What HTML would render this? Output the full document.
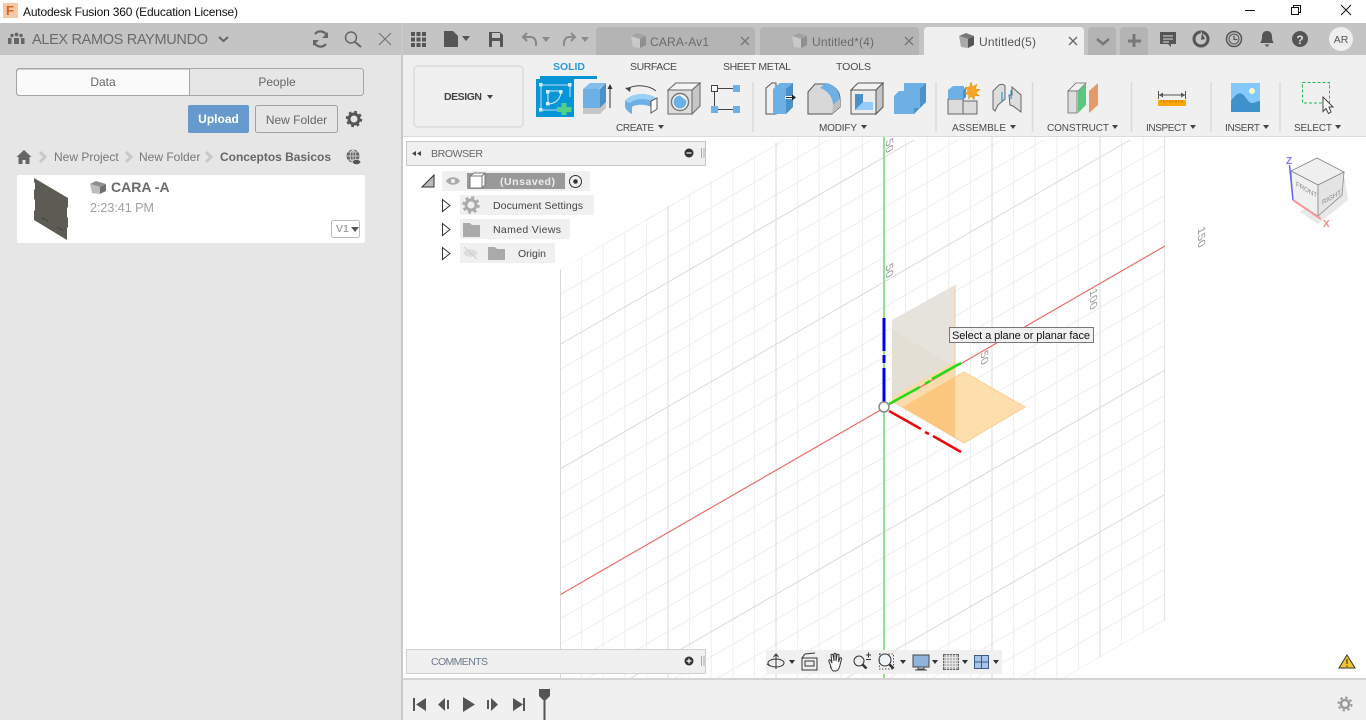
<!DOCTYPE html>
<html><head><meta charset="utf-8"><title>Autodesk Fusion 360</title>
<style>
html,body{margin:0;padding:0;background:#fff;width:1366px;height:720px;overflow:hidden}
svg{display:block;position:absolute;left:0;top:0}
text{font-family:"Liberation Sans",Arial,sans-serif;fill:#555}
.l{font-size:10px;fill:#4a4a4a}
</style></head><body>
<svg width="1366" height="720" viewBox="0 0 1366 720" xmlns="http://www.w3.org/2000/svg">
<defs>
<clipPath id="g"><polygon points="560,270 785,137 1164.800,137 1164.800,620 1064,678 560,678"/></clipPath>
<clipPath id="vp"><rect x="403" y="137" width="963" height="541"/></clipPath>
</defs>
<rect width="1366" height="720" fill="#fff"/>
<!-- title bar -->
<rect x="3" y="3" width="15" height="15" fill="#f3c9a8"/>
<text x="6" y="15" style="font-size:13px;font-weight:bold;fill:#d9661f">F</text>
<text x="23" y="16" style="font-size:12px;fill:#111" textLength="215">Autodesk Fusion 360 (Education License)</text>
<path d="M1245 10.500h10" stroke="#111" fill="none"/>
<path d="M1291.500 7.500h7v7h-7zM1293.500 7.500v-2h7v7h-2" stroke="#111" fill="none"/>
<path d="M1341 5l10 10M1351 5l-10 10" stroke="#111" fill="none"/>

<!-- viewport -->
<g clip-path="url(#vp)">
<g clip-path="url(#g)">
<path fill="none" stroke="#eeeeee" d="M581.600 137V678M603.200 137V678M624.800 137V678M646.400 137V678M689.600 137V678M711.200 137V678M732.800 137V678M754.400 137V678M797.600 137V678M819.200 137V678M840.800 137V678M862.400 137V678M905.600 137V678M927.200 137V678M948.800 137V678M970.400 137V678M1013.600 137V678M1035.200 137V678M1056.800 137V678M1078.400 137V678M1121.600 137V678M1143.200 137V678"/>
<path fill="none" stroke="#eeeeee" d="M560 269.700L785 139.900M560 294.600L828 140M560 319.600L871 140M560 369.500L958 140M560 394.400L1001 140M560 419.400L1044 140M560 444.300L1087 140M560 494.200L1165 145.200M560 519.200L1165 170.200M560 544.100L1165 195.100M560 569L1165 220M560 619L1165 270M560 644L1165 295M560 669L1165 320M587.700 678L1165 345M674.400 678L1165 395M717.700 678L1165 420M761 678L1165 445M804.400 678L1165 470M889.400 678L1165 519M932.700 678L1165 544M976 678L1165 569M1019.400 678L1165 594M1063.600 678L1165 619.500"/>
<path fill="none" stroke="#dbdbdb" d="M560.500 137V678M668 137V678M776 137V678M992 137V678M1100 137V678M1164.500 137V678"/>
<path fill="none" stroke="#dbdbdb" d="M560 344.500L914 140M560 469L1130 140M631 678L1165 370M846.900 678L1165 494.500"/>
</g>
<!-- planes -->
<polygon points="892,320 955,285 955,362 892,398" fill="#e6e2dc"/>
<polygon points="892,330 955,367 955,438 892,402" fill="#e3ddd2" opacity=".75"/>
<polygon points="892,397 955,361 955,438 892,402" fill="#fbd9a4" opacity=".85"/>
<polygon points="903,407 964,372 1025,407 964,443" fill="#fddca6" stroke="#fcc983" stroke-width="1" opacity=".9"/>
<polygon points="903,407 955,377 955,438" fill="#fcc77f"/>
<path d="M955 285V438" stroke="#f4cc94" stroke-width="1"/>
<!-- axes -->
<path d="M560.500 594.500L1165 246" stroke="#ec6b6b" stroke-width="1.200" fill="none"/>
<path d="M884 137V678" stroke="#94e08c" stroke-width="2" fill="none"/>
<path d="M884 318V351M884 355V363M884 368V402" stroke="#0000ee" stroke-width="3" fill="none"/>
<path d="M889 404L920 387M925 384L930 381M932 379L961 363" stroke="#22dd11" stroke-width="2.500" fill="none"/>
<path d="M889 411L921 429M925 432L929 434M933 436L961 452" stroke="#ee0808" stroke-width="2.500" fill="none"/>
<circle cx="884" cy="407" r="5" fill="#fff" stroke="#8a8a8a" stroke-width="1.500"/>
<!-- labels -->
<text transform="matrix(0 1 -.866 .5 886 141)" style="fill:#999;font-size:12px">50</text>
<text transform="matrix(0 1 -.866 .5 886 266)" style="fill:#999;font-size:12px">50</text>
<text transform="matrix(0 1 -.866 .5 981 353)" style="fill:#999;font-size:12px">50</text>
<text transform="matrix(0 1 -.866 .5 1090 291)" style="fill:#999;font-size:12px">100</text>
<text transform="matrix(0 1 -.866 .5 1198 229)" style="fill:#999;font-size:12px">150</text>
<!-- view cube -->
<polygon points="1300,212 1318,224 1348,200 1345,178" fill="#e0e0e0" opacity=".7"/>
<polygon points="1317,158 1344,172 1318,185 1291,171" fill="#efefef" stroke="#888" stroke-width=".8"/>
<polygon points="1291,171 1318,185 1318,216 1293,200" fill="#f0f0f0" stroke="#888" stroke-width=".8"/>
<polygon points="1318,185 1344,172 1342,195 1318,216" fill="#e4e4e4" stroke="#888" stroke-width=".8"/>
<text transform="matrix(.87 .5 0 1 1296 186)" style="font-size:7px;fill:#888">FRONT</text>
<text transform="matrix(.87 -.5 0 1 1322 205)" style="font-size:7px;fill:#888">RIGHT</text>
<path d="M1289.500 165L1293 200" stroke="#6666ee" stroke-width="1.500"/>
<path d="M1293 200L1321 219" stroke="#f49a9a" stroke-width="2"/>
<text x="1286" y="164" style="font-size:10px;fill:#7a7aee;font-weight:bold">Z</text>
<text x="1323" y="227" style="font-size:10px;fill:#f08a8a;font-weight:bold">X</text>
<!-- tooltip -->
<rect x="949.500" y="327.500" width="144" height="15" fill="#f0f0f0" stroke="#777"/>
<text x="952" y="339" style="font-size:11px;fill:#111" textLength="138">Select a plane or planar face</text>
<!-- warning -->
<path d="M1347 655l8 13h-16z" fill="#f4c430" stroke="#333" stroke-width="1"/>
<path d="M1347 659v5M1347 665.500v1.500" stroke="#222"/>
</g>

<!-- top gray bars -->
<rect x="0" y="23" width="1366" height="32" fill="#c4c4c4"/>
<rect x="0" y="55" width="402" height="665" fill="#e6e6e6"/>
<rect x="401" y="23" width="2" height="697" fill="#c9c9c9"/>
<!-- left header -->
<g fill="#666">
<circle cx="12" cy="35.500" r="1.700"/><circle cx="16.500" cy="34.500" r="1.900"/><circle cx="21" cy="35.500" r="1.700"/>
<rect x="8" y="38" width="3.500" height="6"/><rect x="14" y="38" width="5" height="6"/><rect x="21" y="38" width="3.500" height="6"/>
</g>
<text x="32" y="44" style="font-size:14.500px;fill:#6a6a6a" textLength="176">ALEX RAMOS RAYMUNDO</text>
<path d="M219 37l4.500 4 4.500-4" stroke="#666" stroke-width="2" fill="none"/>
<path d="M327 36a7 7 0 0 0-12-2M314 42a7 7 0 0 0 12 2" stroke="#666" stroke-width="2.200" fill="none"/>
<path d="M328 32v6h-6zM313 46v-6h6z" fill="#666"/>
<circle cx="351" cy="37.500" r="5.500" fill="none" stroke="#666" stroke-width="1.500"/>
<path d="M355 42l6 5" stroke="#666" stroke-width="2"/>
<path d="M379 33l12 12M391 33l-12 12" stroke="#777" stroke-width="1.200"/>

<!-- data/people -->
<rect x="16.500" y="68.500" width="347" height="27" rx="3" fill="#e6e6e6" stroke="#a5a5a5"/>
<path d="M189.500 69H19.500a3 3 0 0 0-3 3v20.500a3 3 0 0 0 3 3h170z" fill="#fafafa" stroke="#a5a5a5"/>
<text x="103" y="86" text-anchor="middle" style="font-size:12px;fill:#666">Data</text>
<text x="277" y="86" text-anchor="middle" style="font-size:12px;fill:#666">People</text>
<rect x="188" y="105" width="61" height="28" rx="2" fill="#6699cc"/>
<text x="218.500" y="123" text-anchor="middle" style="font-size:12px;font-weight:bold;fill:#fff">Upload</text>
<rect x="255.500" y="105.500" width="82" height="27" rx="2" fill="#e6e6e6" stroke="#a0a0a0"/>
<text x="296.500" y="124" text-anchor="middle" style="font-size:12px;fill:#666">New Folder</text>
<circle cx="354" cy="119" r="5" fill="none" stroke="#555" stroke-width="3"/>
<circle cx="354" cy="119" r="7.200" fill="none" stroke="#555" stroke-width="2" stroke-dasharray="2.800 2.850"/>
<!-- breadcrumbs -->
<path d="M24 150l-7.500 7h2v7h4v-4h3v4h4v-7h2z" fill="#666"/>
<path d="M40 152l5 5-5 5M126 152l5 5-5 5M206 152l5 5-5 5" stroke="#c8c8c8" stroke-width="3" fill="none"/>
<text x="54" y="161" style="font-size:12px;fill:#777">New Project</text>
<text x="139" y="161" style="font-size:12px;fill:#777">New Folder</text>
<text x="220" y="161" style="font-size:12px;fill:#666;font-weight:bold" textLength="111">Conceptos Basicos</text>
<circle cx="353" cy="156" r="6.500" fill="#666"/>
<path d="M346.500 156h13M353 149.500v13M348 152h10M348 160h10M353 149.500c-4 4-4 9 0 13M353 149.500c4 4 4 9 0 13" stroke="#e6e6e6" stroke-width=".7" fill="none"/>
<path d="M352 162c2-3.500 7-3.500 9 0c-2 3.500-7 3.500-9 0z" fill="#555" stroke="#e6e6e6" stroke-width=".7"/>
<!-- card -->
<rect x="17" y="175" width="348" height="68" rx="2" fill="#fff"/>
<polygon points="34,178 68,198 68,207 67,208 67,217 68,218 68,227 67,228 67,240 34,220 34,211 35,210 35,200 34,199 34,190 35,189 35,183 34,182" fill="#5c5c54"/>
<path d="M42 218l6 3M57 227l6 3" stroke="#333" stroke-dasharray="1.500 1"/>
<polygon points="90,184 96,181 106,184 100,187" fill="#8f8f8f"/>
<polygon points="90,184 100,187 100,194 92,193" fill="#bdbdbd"/>
<polygon points="100,187 106,184 106,191 100,194" fill="#6f6f6f"/>
<text x="111" y="192" style="font-size:14px;font-weight:bold;fill:#6a6a6a">CARA -A</text>
<text x="90" y="212" style="font-size:12.500px;fill:#a0a0a0">2:23:41 PM</text>
<rect x="331.500" y="220.500" width="28" height="17" rx="2" fill="#fff" stroke="#bbb"/>
<text x="336" y="232" style="font-size:10.500px;fill:#888">V1</text>
<path d="M351 227h8l-4 5z" fill="#555"/>

<!-- toolbar -->
<g fill="#555">
<rect x="411" y="32" width="4" height="4"/><rect x="416.500" y="32" width="4" height="4"/><rect x="422" y="32" width="4" height="4"/>
<rect x="411" y="37.500" width="4" height="4"/><rect x="416.500" y="37.500" width="4" height="4"/><rect x="422" y="37.500" width="4" height="4"/>
<rect x="411" y="43" width="4" height="4"/><rect x="416.500" y="43" width="4" height="4"/><rect x="422" y="43" width="4" height="4"/>
<path d="M444 31h9l5 5v11h-14z"/><path d="M462 36h8l-4 5z"/>
<path d="M489 32h11l3 3v12h-14zM492 33v5h8v-5zM492 41v6h8v-6z" fill-rule="evenodd"/>
</g>
<g fill="none" stroke="#888" stroke-width="2"><path d="M523 37h8c3 0 5 3 5 6v3M527 33l-4 4 4 4"/><path d="M575 37h-6c-3 0-5 3-5 6v3M571 33l4 4-4 4" stroke="#8a8a8a"/></g>
<path d="M542 37h8l-4 5zM581 37h8l-4 5z" fill="#8a8a8a"/>
<!-- tabs -->
<path d="M596 55V31a4 4 0 0 1 4-4H751a4 4 0 0 1 4 4V55z" fill="#b4b4b4"/>
<path d="M760 55V31a4 4 0 0 1 4-4H915a4 4 0 0 1 4 4V55z" fill="#b4b4b4"/>
<path d="M924 55V31a4 4 0 0 1 4-4H1080a4 4 0 0 1 4 4V55z" fill="#f0f0f0"/>
<path d="M631 36l7-3 8 3-6 3z" fill="#a3a3a3"/><path d="M631 36l9 3v9l-7-1z" fill="#c9c9c9"/><path d="M640 39l6-3v9l-6 3z" fill="#8f8f8f"/>
<text x="650" y="46" style="font-size:12px;fill:#6a6a6a" textLength="59">CARA-Av1</text>
<path d="M741 37l8 8M749 37l-8 8" stroke="#777" stroke-width="1.300"/>
<path d="M792 36l7-3 8 3-6 3z" fill="#a3a3a3"/><path d="M792 36l9 3v9l-7-1z" fill="#c9c9c9"/><path d="M801 39l6-3v9l-6 3z" fill="#8f8f8f"/>
<text x="812" y="46" style="font-size:12px;fill:#6a6a6a" textLength="62">Untitled*(4)</text>
<path d="M905 37l8 8M913 37l-8 8" stroke="#777" stroke-width="1.300"/>
<path d="M959 36l7-3 8 3-6 3z" fill="#777"/><path d="M959 36l9 3v9l-7-1z" fill="#a9a9a9"/><path d="M968 39l6-3v9l-6 3z" fill="#555"/>
<text x="979" y="46" style="font-size:12px;fill:#555" textLength="57">Untitled(5)</text>
<path d="M1069 37l8 8M1077 37l-8 8" stroke="#666" stroke-width="1.300"/>
<path d="M1088 55V31a4 4 0 0 1 4-4h20a4 4 0 0 1 4 4V55zM1120 55V31a4 4 0 0 1 4-4h20a4 4 0 0 1 4 4V55z" fill="#b4b4b4"/>
<path d="M1097 39l6 5 6-5" stroke="#777" stroke-width="2.500" fill="none"/>
<path d="M1134 34v13M1128 41h13" stroke="#777" stroke-width="3" fill="none"/>
<path d="M1160 32h16v12h-5v3l-3-3h-8z" fill="#555"/><path d="M1163 36h10M1163 39h10M1163 42h6" stroke="#ddd" stroke-width="1"/>
<circle cx="1201" cy="39" r="7" fill="none" stroke="#555" stroke-width="3"/><path d="M1201 31l4 8-5 1z" fill="#c4c4c4"/><path d="M1202 33l3 6-4 1z" fill="#555"/>
<circle cx="1234" cy="39" r="7.500" fill="none" stroke="#555" stroke-width="1.500"/><circle cx="1234" cy="39" r="5" fill="none" stroke="#555"/><path d="M1234 35.500v4h3.500" stroke="#555" fill="none" stroke-width="1.200"/>
<path d="M1267 31c-4 0-5 3-5 6 0 3-1 5-2 6h14c-1-1-2-3-2-6 0-3-1-6-5-6zM1264.500 44.500h5l-2.500 2.500z" fill="#555"/>
<circle cx="1300" cy="39" r="8" fill="#555"/><text x="1300" y="44" text-anchor="middle" style="font-size:12px;font-weight:bold;fill:#ddd">?</text>
<circle cx="1341" cy="39" r="12" fill="#eee"/><text x="1341" y="43" text-anchor="middle" style="font-size:10.500px;fill:#555">AR</text>

<!-- ribbon -->
<rect x="403" y="55" width="963" height="82" fill="#f0f0f0"/>
<rect x="403" y="136" width="963" height="1" fill="#dcdcdc"/>
<rect x="414" y="66" width="109" height="61" rx="4" fill="#f0f0f0" stroke="#e0e0e0" stroke-width="2"/>
<text x="444" y="100" style="font-size:10.500px;font-weight:bold;fill:#444" textLength="38">DESIGN</text>
<path d="M487 95h6l-3 4z" fill="#444"/>
<text x="553" y="70" style="font-size:10.500px;font-weight:bold;fill:#2a9ad8" textLength="32">SOLID</text>
<text x="630" y="70" style="font-size:10.500px;fill:#4a4a4a" textLength="47">SURFACE</text>
<text x="723" y="70" style="font-size:10.500px;fill:#4a4a4a" textLength="68">SHEET METAL</text>
<text x="836" y="70" style="font-size:10.500px;fill:#4a4a4a" textLength="35">TOOLS</text>
<rect x="540" y="76" width="57" height="3" fill="#0696d7"/>
<!-- sketch -->
<rect x="536" y="79" width="38" height="38" fill="#0696d7"/>
<path d="M540 85h30M541 85v25M540 110h24M570 85v12" stroke="#b9dff2" fill="none"/>
<path d="M548 91h13M548 91v13M561 91c0 7-5 13-13 13" stroke="#d8eef8" fill="none"/>
<g fill="#d8eef8"><rect x="539" y="83" width="3.500" height="3.500"/><rect x="568" y="83" width="3.500" height="3.500"/><rect x="539" y="108" width="3.500" height="3.500"/><rect x="546" y="90" width="3.500" height="3.500"/><rect x="559" y="90" width="3.500" height="3.500"/><rect x="546" y="102" width="3.500" height="3.500"/></g>
<path d="M564 103v12M557 109.500h14.500" stroke="#55d088" stroke-width="5" fill="none"/>
<!-- extrude -->
<polygon points="583,89 590,83 606,83 599,89" fill="#84bdec"/>
<rect x="583" y="89" width="17" height="19" fill="#6cb0e6"/>
<polygon points="600,89 606,83 606,102 600,108" fill="#4b91c8"/>
<polygon points="583,108 600,108 606,102 606,108 600,114 583,114" fill="#c6c6c6"/>
<path d="M610 108V86" stroke="#333"/><path d="M607.500 89l2.500-5 2.500 5z" fill="#333"/>
<!-- revolve -->
<path d="M627 89c8-5 22-4 29 2" stroke="#444" fill="none"/><path d="M625 88l6-1-1 5z" fill="#444"/>
<path d="M625 101c6-8 22-9 31-3l-5 9c-5-3-15-3-19 0v7c-4-2-7-5-7-8z" fill="#6cb0e6"/>
<path d="M625 101c6-8 22-9 31-3l-5 3c-6-3-15-3-21 2z" fill="#9ad0f6"/>
<path d="M651 101l6-3v11l-6 4z" fill="#fff" stroke="#555"/>
<!-- hole -->
<polygon points="668,90 676,83 700,83 692,90" fill="#f5f5f5" stroke="#666"/>
<polygon points="668,90 692,90 692,114 668,114" fill="#ddd" stroke="#666"/>
<polygon points="692,90 700,83 700,106 692,114" fill="#c6c6c6" stroke="#666"/>
<circle cx="680" cy="102" r="8.500" fill="#fff" stroke="#777" stroke-width="1.500"/>
<circle cx="680" cy="102" r="6.500" fill="#6cb0e6"/><path d="M680 95.500l6 5a6 6 0 0 0-6-5z" fill="#fff"/>
<!-- pattern -->
<rect x="711.500" y="85.500" width="6" height="6" fill="#fff" stroke="#444"/>
<rect x="733" y="85" width="7" height="7" fill="#6cb0e6"/><rect x="711" y="106" width="7" height="7" fill="#6cb0e6"/><rect x="733" y="106" width="7" height="7" fill="#6cb0e6"/>
<path d="M718 88.500h15M714.500 92v14M718 109.500h15" stroke="#444" fill="none"/>
<!-- press pull -->
<path d="M766 114V88l6-5h4v31z" fill="#f0f0f0" stroke="#555"/>
<polygon points="773,114 773,89 780,83 793,83 793,107 786,114" fill="#6cb0e6"/>
<polygon points="786,114 786,89 793,83 793,107" fill="#4b91c8"/>
<rect x="785" y="96" width="9" height="3" fill="#fff"/><path d="M786 97.500h8" stroke="#222"/><path d="M792 94.500l4 3-4 3z" fill="#222"/>
<!-- fillet -->
<path d="M808 114V92l7-8h11c8 1 14 7 14 15v8l-8 7z" fill="#d8d8d8" stroke="#555"/>
<path d="M820 88l6-5c8 1 14 8 14 17l-7 5c0-8-6-15-13-17z" fill="#6cb0e6"/>
<path d="M833 105l7-6v8l-8 7z" fill="#c0c0c0"/>
<!-- shell -->
<polygon points="851,90 858,83 883,83 876,90" fill="#f3f3f3" stroke="#555"/>
<rect x="851" y="90" width="25" height="24" fill="#ececec" stroke="#555"/>
<polygon points="876,90 883,83 883,107 876,114" fill="#c6c6c6" stroke="#555"/>
<rect x="855" y="94" width="8" height="16" fill="#4b91c8"/><polygon points="855,110 863,102 873,102 873,110" fill="#93ccf7"/>
<!-- combine -->
<polygon points="904,83 911,83 926,83 926,102 920,108 904,108" fill="#6cb0e6"/>
<polygon points="894,96 899,91 914,91 914,114 894,114" fill="#6cb0e6"/>
<polygon points="914,108 920,108 914,114" fill="#4b91c8"/><polygon points="920,89 926,83 926,102 920,108" fill="#4b91c8"/>
<!-- assemble -->
<rect x="948" y="99" width="15" height="15" fill="#dcdcdc" stroke="#666"/><rect x="963" y="101" width="14" height="13" fill="#dcdcdc" stroke="#666"/>
<polygon points="948,90 953,86 964,86 964,99 948,99" fill="#6cb0e6"/><polygon points="963,90 966,87 966,97 963,100" fill="#4b91c8"/>
<path d="M971 82l1.800 5 4.200-3-1.700 5 4.700.500-4 3 3.500 3.500-5-.500-.500 4.500-2.500-4-3 3 .500-4.500-4.500-.500 3.500-3-3-3.500 4.500-.500z" fill="#f6a623" stroke="#e08a00" stroke-width=".5"/>
<path d="M993 91l6-6c2-1 5-1 6 1v13l-7 6-3 6-2-2z" fill="#ddd" stroke="#666"/>
<path d="M1012 87l9 8v17l-8-6-3-1-1-10h3z" fill="#ddd" stroke="#666"/>
<path d="M1002 92v10M1011 90v9" stroke="#2a9ad8" stroke-width="1.200"/>
<!-- construct -->
<polygon points="1068,91 1076,83 1086,83 1078,91" fill="#f2f2f2" stroke="#666" stroke-width=".8"/>
<polygon points="1068,91 1077,91 1077,113 1068,113" fill="#dedede" stroke="#666" stroke-width=".8"/>
<polygon points="1078,91 1086,83 1086,105 1078,113" fill="#5cc67f"/>
<polygon points="1089,91 1098,83 1098,105 1089,113" fill="#e59a6a"/>
<!-- inspect -->
<path d="M1158.500 91v8M1185.500 91v8M1159 95h26" stroke="#555" fill="none"/><path d="M1159 95l4-2.500v5zM1185 95l-4-2.500v5z" fill="#555"/>
<rect x="1158" y="100" width="28" height="6" fill="#f9a50d"/><path d="M1161 100v2M1164 100v3M1167 100v2M1170 100v3M1173 100v2M1176 100v3M1179 100v2M1182 100v3" stroke="#a86f00" stroke-width=".7"/>
<!-- insert -->
<rect x="1231" y="83" width="29" height="29" fill="#84c8fc"/>
<path d="M1231 112v-11c4-6 8-9 11-7 4 2 6 9 10 9 3 0 5-2 8-2v11z" fill="#3f91cc"/>
<circle cx="1252" cy="91" r="3" fill="#fdf6c8"/>
<!-- select -->
<rect x="1302.500" y="82.500" width="27" height="20.500" fill="none" stroke="#1eb955" stroke-dasharray="3 2"/>
<path d="M1323 97l10 10h-4l2 5-2.500 1.500-2.500-5-3 3z" fill="#fff" stroke="#444"/>
<!-- separators -->
<path d="M753 82v50M936 82v50M1032.500 82v50M1131.500 82v50M1211 82v50M1280 82v50" stroke="#dadada" stroke-width="1.500"/>
<!-- ribbon labels -->
<text class="l" x="616" y="131" textLength="38">CREATE</text><path d="M658 125h6l-3 4z" fill="#444"/>
<text class="l" x="819" y="131" textLength="38">MODIFY</text><path d="M861 125h6l-3 4z" fill="#444"/>
<text class="l" x="952" y="131" textLength="54">ASSEMBLE</text><path d="M1010 125h6l-3 4z" fill="#444"/>
<text class="l" x="1047" y="131" textLength="62">CONSTRUCT</text><path d="M1112 125h6l-3 4z" fill="#444"/>
<text class="l" x="1146" y="131" textLength="41">INSPECT</text><path d="M1190 125h6l-3 4z" fill="#444"/>
<text class="l" x="1225" y="131" textLength="35">INSERT</text><path d="M1263 125h6l-3 4z" fill="#444"/>
<text class="l" x="1294" y="131" textLength="38">SELECT</text><path d="M1335 125h6l-3 4z" fill="#444"/>

<!-- browser -->
<rect x="406.500" y="141.500" width="299" height="24" fill="#f0f0f0" stroke="#c8c8c8"/>
<path d="M416 151v5l-4-2.500zM421 151v5l-4-2.500z" fill="#444"/>
<text x="431" y="157" style="font-size:10.500px;fill:#666" textLength="52">BROWSER</text>
<circle cx="689" cy="153" r="4.500" fill="#333"/><path d="M686.500 153h5" stroke="#fff" stroke-width="1.200"/>
<path d="M701.500 148v10M704 148v10" stroke="#aaa" stroke-width="1"/>
<polygon points="422,187 434,175 434,187" fill="#bbb" stroke="#333"/>
<rect x="442" y="171" width="148" height="20" fill="#f0f0f0"/>
<path d="M446 181c3-5 11-5 14 0c-3 5-11 5-14 0z" fill="#aaa"/><circle cx="453" cy="181" r="2" fill="#f0f0f0"/>
<rect x="467" y="173" width="98" height="16" fill="#999"/>
<path d="M470 176l4-3h11v12l-3 3h-12z" fill="#fff" stroke="#777"/><path d="M470 176h12v12M482 176l3-3" stroke="#777" fill="none"/>
<text x="500" y="185" style="font-size:10.500px;font-weight:bold;fill:#eee" textLength="55">(Unsaved)</text>
<circle cx="575.500" cy="181.500" r="6" fill="none" stroke="#333"/><circle cx="575.500" cy="181.500" r="2.300" fill="#333"/>
<rect x="460" y="195" width="134" height="20" fill="#f0f0f0"/>
<rect x="460" y="219" width="110" height="20" fill="#f0f0f0"/>
<rect x="460" y="243" width="95" height="20" fill="#f0f0f0"/>
<path d="M442.500 199.500l7.500 6-7.500 6zM442.500 223.500l7.500 6-7.500 6zM442.500 247.500l7.500 6-7.500 6z" fill="#fff" stroke="#333"/>
<circle cx="471" cy="205" r="5" fill="none" stroke="#aaa" stroke-width="3"/><circle cx="471" cy="205" r="7.500" fill="none" stroke="#aaa" stroke-width="2.500" stroke-dasharray="2.900 3"/>
<text x="493" y="209" style="font-size:10.500px;fill:#444" textLength="90">Document Settings</text>
<path d="M463 223h7l2 2h8v12h-17z" fill="#aaa"/>
<text x="493" y="233" style="font-size:10.500px;fill:#444" textLength="68">Named Views</text>
<path d="M463 253c3-5 11-5 15 0c-4 5-12 5-15 0z" fill="#ddd"/><path d="M464 247l13 12" stroke="#ccc"/>
<path d="M488 247h7l2 2h8v11h-17z" fill="#aaa"/>
<text x="518" y="257" style="font-size:10.500px;fill:#444">Origin</text>
<!-- comments -->
<rect x="406.500" y="649.500" width="299" height="24" fill="#f0f0f0" stroke="#d0d0d0"/>
<text x="431" y="665" style="font-size:10.500px;fill:#6c7a8c" textLength="57">COMMENTS</text>
<circle cx="689" cy="661" r="4.500" fill="#333"/><path d="M686.500 661h5M689 658.500v5" stroke="#fff" stroke-width="1.200"/>
<path d="M701.500 656v10M704 656v10" stroke="#aaa"/>

<!-- nav bar -->
<rect x="766" y="650" width="236" height="24" fill="#f0f0f0"/>
<g fill="none" stroke="#333" stroke-width="1">
<ellipse cx="776" cy="663" rx="8" ry="4"/><path d="M776 654v15"/><path d="M773.500 657l2.500-3 2.500 3M767 664l3 2"/>
<path d="M802 658h15v12h-15zM802 658l3-4 10-1M805 661h9v5h-9z"/>
<path d="M831 667c-1-4-3-6-2-7 1-1 2 1 3 3l-1-8c0-1 2-1 2 0l1 6v-7c0-1 2-1 2 0v7l1-6c0-1 2-1 2 0l-.5 7 1.500-4c.5-1 2 0 1.500 1l-2 8c-1 3-2 4-4 4h-2c-1 0-2-2-3-4z" fill="#fff"/>
<circle cx="859" cy="661" r="5"/><path d="M866 655h5M868.500 652.500v5M866 659.500h5"/>
<circle cx="885" cy="660" r="6" fill="#eef4f6"/>
<rect x="879.500" y="654" width="14" height="15" stroke-dasharray="1.500 1.500" stroke="#555"/>
</g>
<path d="M862.500 664.500l4 4M889.500 664.500l4 4" stroke="#333" stroke-width="2.500"/>
<g fill="#333"><path d="M789 660h6l-3 4zM900 660h6l-3 4zM932 660h6l-3 4zM962 660h6l-3 4zM993 660h6l-3 4z"/></g>
<rect x="913" y="655" width="16" height="12" fill="#8fb4de" stroke="#444"/>
<path d="M918 667v2h6v-2M915 670h12" stroke="#444" fill="none"/>
<rect x="943.500" y="654.500" width="15" height="15" fill="#bbb" stroke="#666"/>
<path d="M946.500 654v16M949.500 654v16M952.500 654v16M955.500 654v16M943 657.500h16M943 660.500h16M943 663.500h16M943 666.500h16" stroke="#eee" stroke-width=".7"/>
<rect x="974.500" y="655.500" width="14" height="13" fill="#a9c4e6" stroke="#3c5a88"/>
<path d="M981.500 655v14M974 662h15" stroke="#3c5a88"/>

<!-- timeline -->
<rect x="403" y="678" width="963" height="42" fill="#f0f0f0"/>
<rect x="403" y="678" width="963" height="2" fill="#d4d4d4"/>
<g fill="#555">
<path d="M413 698h2v13h-2zM426 698v13l-10-6.500z"/>
<path d="M438 704.500l7-6.500v13zM447 700h2v9h-2z"/>
<path d="M463 697l12 7.500-12 7.500z"/>
<path d="M487 700h2v9h-2zM491 698l7 6.500-7 6.500z"/>
<path d="M513 698v13l10-6.500zM523 698h2v13h-2z"/>
<path d="M539 689h11v7l-4 4h-3l-4-4z"/><rect x="543.500" y="698" width="2" height="22"/>
</g>
<circle cx="1345" cy="704" r="4" fill="none" stroke="#999" stroke-width="2.500"/>
<circle cx="1345" cy="704" r="6.500" fill="none" stroke="#999" stroke-width="2" stroke-dasharray="2.500 2.600"/>
</svg>
</body></html>
